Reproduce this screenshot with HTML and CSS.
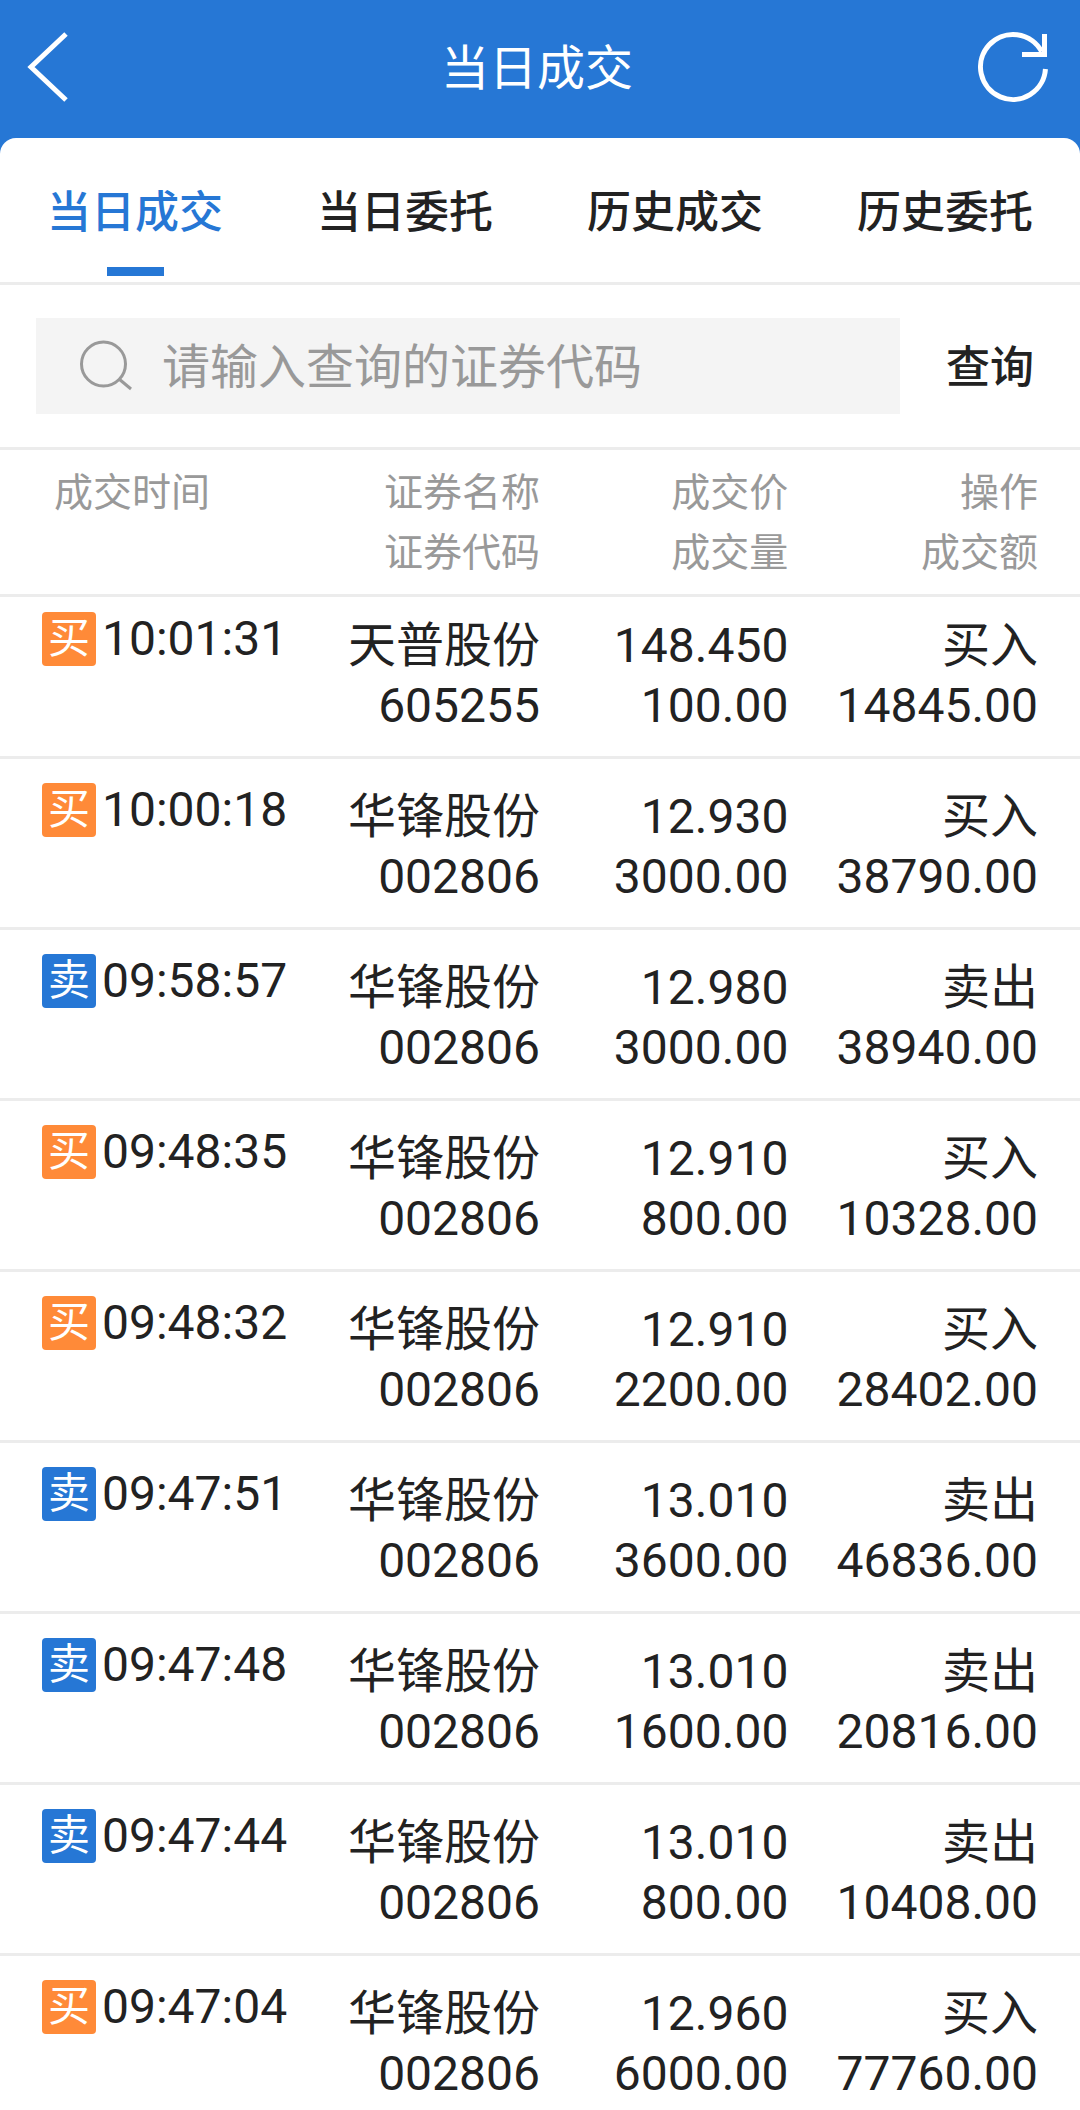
FILE: index.html
```html
<!DOCTYPE html>
<html lang="zh-CN">
<head>
<meta charset="utf-8">
<meta name="viewport" content="width=device-width, initial-scale=1">
<title>当日成交</title>
<link rel="stylesheet" href="styles.css">
</head>
<body>
<div class="app">
  <header class="topbar">
    <button class="icon-button" type="button" aria-label="返回">
      <svg width="44" height="72" viewBox="0 0 44 72" fill="none" stroke="currentColor" stroke-width="5"><path d="M42 3 7 36l35 33"/></svg>
    </button>
    <h1 class="title">当日成交</h1>
    <button class="icon-button" type="button" aria-label="刷新">
      <svg width="72" height="72" viewBox="0 0 72 72" fill="none" stroke="currentColor" stroke-width="5"><path d="M67.440 38A32.500 32.500 0 1 1 63.700 20.700"/><path d="M66.500 3v21M44 23.500h25"/></svg>
    </button>
  </header>
  <main class="panel">
    <nav class="tabs">
      <a class="tab tab-active" href="#" aria-current="page">当日成交</a>
      <a class="tab" href="#">当日委托</a>
      <a class="tab" href="#">历史成交</a>
      <a class="tab" href="#">历史委托</a>
    </nav>
    <form class="search">
      <label class="search-box">
        <svg width="54" height="54" viewBox="0 0 54 54" fill="none" stroke="#999" stroke-width="3"><circle cx="25.500" cy="25" r="22"/><path d="m41 40 12 10"/></svg>
        <input class="search-input" type="text" placeholder="请输入查询的证券代码" aria-label="证券代码">
      </label>
      <button class="search-button" type="button">查询</button>
    </form>
    <table class="deals">
      <thead>
        <tr><th class="col-time">成交时间</th><th class="col-name">证券名称<br>证券代码</th><th class="col-price">成交价<br>成交量</th><th class="col-amount">操作<br>成交额</th></tr>
      </thead>
      <tbody>
        <tr><td><div class="time"><span class="badge buy">买</span>10:01:31</div></td><td>天普股份<br>605255</td><td>148.450<br>100.00</td><td>买入<br>14845.00</td></tr>
        <tr><td><div class="time"><span class="badge buy">买</span>10:00:18</div></td><td>华锋股份<br>002806</td><td>12.930<br>3000.00</td><td>买入<br>38790.00</td></tr>
        <tr><td><div class="time"><span class="badge sell">卖</span>09:58:57</div></td><td>华锋股份<br>002806</td><td>12.980<br>3000.00</td><td>卖出<br>38940.00</td></tr>
        <tr><td><div class="time"><span class="badge buy">买</span>09:48:35</div></td><td>华锋股份<br>002806</td><td>12.910<br>800.00</td><td>买入<br>10328.00</td></tr>
        <tr><td><div class="time"><span class="badge buy">买</span>09:48:32</div></td><td>华锋股份<br>002806</td><td>12.910<br>2200.00</td><td>买入<br>28402.00</td></tr>
        <tr><td><div class="time"><span class="badge sell">卖</span>09:47:51</div></td><td>华锋股份<br>002806</td><td>13.010<br>3600.00</td><td>卖出<br>46836.00</td></tr>
        <tr><td><div class="time"><span class="badge sell">卖</span>09:47:48</div></td><td>华锋股份<br>002806</td><td>13.010<br>1600.00</td><td>卖出<br>20816.00</td></tr>
        <tr><td><div class="time"><span class="badge sell">卖</span>09:47:44</div></td><td>华锋股份<br>002806</td><td>13.010<br>800.00</td><td>卖出<br>10408.00</td></tr>
        <tr><td><div class="time"><span class="badge buy">买</span>09:47:04</div></td><td>华锋股份<br>002806</td><td>12.960<br>6000.00</td><td>买入<br>77760.00</td></tr>
      </tbody>
    </table>
  </main>
</div>
</body>
</html>
```
FILE: styles.css
```css
* {
  box-sizing: border-box;
}

body {
  margin: 0;
  background: #2677d5;
  color: #222;
  font-family: Roboto, "Noto Sans CJK SC", sans-serif;
  font-size: 48px;
  line-height: 60px;
}

button,
input {
  margin: 0;
  padding: 0;
  border: 0;
  background: none;
  color: inherit;
  font: inherit;
}

svg {
  display: block;
  flex: none;
}

.app {
  display: flex;
  flex-direction: column;
  height: 100vh;
}

.topbar {
  display: grid;
  grid-template-columns: 1fr auto 1fr;
  align-items: center;
  flex: none;
  height: 138px;
  padding: 0 30px 4px 24px;
  color: #fff;
}

.icon-button:last-child {
  justify-self: end;
}

.title {
  margin: 0;
  padding-top: 4px;
  font-size: 48px;
  font-weight: 400;
}

.panel {
  flex: 1;
  min-height: 0;
  overflow-y: auto;
  scrollbar-width: none;
  border-radius: 16px 16px 0 0;
  background: #fff;
}

.tabs {
  display: grid;
  grid-template-columns: repeat(4, 1fr);
  border-bottom: 3px solid #ececec;
}

.tab {
  display: flex;
  flex-direction: column;
  align-items: center;
  height: 144px;
  padding-top: 45px;
  color: inherit;
  font-size: 44px;
  font-weight: 500;
  text-decoration: none;
}

.tab-active {
  color: #2677d5;
}

.tab-active::after {
  content: "";
  width: 57px;
  height: 9px;
  margin-top: 24px;
  background: #2677d5;
}

.search {
  display: flex;
  padding: 33px 0 33px 36px;
  border-bottom: 3px solid #ececec;
}

.search-box {
  display: flex;
  flex: 1;
  align-items: center;
  gap: 30px;
  min-width: 0;
  height: 96px;
  padding: 0 42px;
  background: #f4f4f4;
}

.search-input {
  flex: 1;
  min-width: 0;
  padding-top: 4px;
  outline: 0;
}

.search-input::placeholder {
  color: #999;
  opacity: 1;
}

.search-button {
  width: 180px;
  padding-top: 4px;
  font-size: 44px;
  font-weight: 500;
}

.deals {
  width: 100%;
  table-layout: fixed;
  border-collapse: separate;
  border-spacing: 0;
}

.col-time {
  width: 28%;
}

.col-name {
  width: 22%;
}

.col-price {
  width: 23%;
}

.col-amount {
  width: 27%;
}

th,
td {
  padding: 28px 0 20px;
  border-bottom: 3px solid #ececec;
  text-align: right;
  vertical-align: top;
  white-space: nowrap;
}

th {
  padding: 13px 0 11px;
  color: #999;
  font-size: 39px;
  font-weight: 400;
}

th:first-child {
  padding-left: 54px;
  text-align: left;
}

td:first-child {
  padding-left: 42px;
}

th:last-child,
td:last-child {
  padding-right: 42px;
}

tbody tr:first-child td {
  padding-top: 19px;
}

.time {
  display: flex;
  align-items: center;
  gap: 6px;
  height: 46px;
}

.badge {
  width: 54px;
  height: 54px;
  border-radius: 4px;
  color: #fff;
  font-size: 42px;
  line-height: 54px;
  text-align: center;
}

.buy {
  background: #ff8a38;
}

.sell {
  background: #2677d5;
}
```
